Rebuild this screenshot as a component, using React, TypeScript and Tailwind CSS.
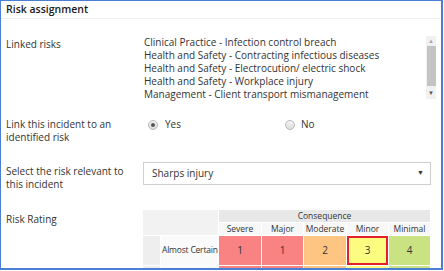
import React from "react";

const risks = [
  "Clinical Practice - Infection control breach",
  "Health and Safety - Contracting infectious diseases",
  "Health and Safety - Electrocution/ electric shock",
  "Health and Safety - Workplace injury",
  "Management - Client transport mismanagement",
];

function Radio({ checked }: { checked?: boolean }) {
  return (
    <span className="relative inline-flex h-[10px] w-[10px] items-center justify-center rounded-full border border-[#b8b8b8] bg-gradient-to-b from-[#f4f4f4] to-[#dcdcdc]">
      {checked && <span className="h-[4px] w-[4px] rounded-full bg-[#555]" />}
    </span>
  );
}

export default function App() {
  const cols = ["Severe", "Major", "Moderate", "Minor", "Minimal"];
  const cells = [
    { v: "1", bg: "bg-[#f98282]" },
    { v: "1", bg: "bg-[#f98282]" },
    { v: "2", bg: "bg-[#fdc581]" },
    { v: "3", bg: "bg-[#fcfc80]", sel: true },
    { v: "4", bg: "bg-[#c9e282]" },
  ];
  return (
    <div
      className="h-[271px] w-[444px] overflow-hidden bg-white"
      style={{ fontFamily: "'Open Sans', Lato, Arial, sans-serif" }}
    >
      <div className="h-[270px] w-[443px] overflow-hidden border-t border-l border-r-2 border-b-2 border-[#4a7fd4] text-[#333]">
        <div className="flex h-[18px] items-center border-b border-[#f0f0f0] px-[5px] text-[10.5px] font-semibold text-[#1a1a1a]">
          Risk assignment
        </div>

        {/* Linked risks */}
        <div className="mt-[17px] flex">
          <div className="w-[142px] pl-[5px] pt-[2px] text-[10px] leading-[13px]">Linked risks</div>
          <div className="flex w-[293px] justify-between">
            <div className="pl-[1px] text-[10px] leading-[13px] text-[#333]">
              {risks.map((r) => (
                <div key={r}>{r}</div>
              ))}
            </div>
            <div className="flex h-[63px] w-[10px] flex-col items-center bg-[#f1f1f1]">
              <div className="flex h-[10px] items-center text-[6px] leading-none text-[#aaa]">▲</div>
              <div className="h-[40px] w-[9px] bg-[#c4c4c4]" />
              <div className="flex h-[13px] items-center text-[6px] leading-none text-[#555]">▼</div>
            </div>
          </div>
        </div>

        {/* Link incident */}
        <div className="mt-[17px] flex">
          <div className="w-[142px] pl-[5px] text-[10px] leading-[13px]">
            <div>Link this incident to an</div>
            <div>identified risk</div>
          </div>
          <div className="flex items-start pt-[1px]">
            <div className="flex w-[142px] items-center pl-[5px]">
              <Radio checked />
              <span className="ml-[7px] text-[10px] leading-[11px]">Yes</span>
            </div>
            <div className="flex items-center">
              <Radio />
              <span className="ml-[6px] text-[10px] leading-[11px]">No</span>
            </div>
          </div>
        </div>

        {/* Select risk */}
        <div className="mt-[18px] flex">
          <div className="w-[142px] pl-[5px] pt-[3px] text-[10px] leading-[13px]">
            <div>Select the risk relevant to</div>
            <div>this incident</div>
          </div>
          <div className="flex h-[23px] w-[288px] items-center justify-between border border-[#cfcfcf] pl-[8px] pr-[6px] text-[10px]">
            <span>Sharps injury</span>
            <span className="text-[7px] text-[#333]">▼</span>
          </div>
        </div>

        {/* Risk rating */}
        <div className="mt-[19px] flex">
          <div className="w-[142px] pl-[5px] pt-[3px] text-[10px] leading-[13px]">Risk Rating</div>
          <div className="grid w-[288px] grid-cols-[17px_57px_42px_41px_42px_41px_41px] grid-rows-[12px_12px_29px_20px] gap-[1px] bg-white text-[8.5px] text-[#333]">
            <div className="col-span-2 row-span-2 bg-[#f2f2f2]" />
            <div className="col-span-5 flex items-center justify-center bg-[#e8e8e8] leading-none">Consequence</div>
            {cols.map((c) => (
              <div key={c} className="flex items-center justify-center bg-[#f7f7f7] leading-none">
                {c}
              </div>
            ))}
            <div className="bg-[#eeeeee]" />
            <div className="flex items-center bg-[#fafafa] pl-[1px] leading-none whitespace-nowrap tracking-[-0.2px]">Almost Certain</div>
            {cells.map((c, i) => (
              <div
                key={i}
                className={`flex items-center justify-center text-[10px] ${c.bg} ${c.sel ? "border-2 border-[#e3202c]" : ""}`}
              >
                {c.v}
              </div>
            ))}
            <div className="bg-[#eeeeee]" />
            <div className="bg-[#fafafa]" />
            {cells.map((c, i) => (
              <div key={"b" + i} className={c.bg} />
            ))}
          </div>
        </div>
      </div>
    </div>
  );
}
